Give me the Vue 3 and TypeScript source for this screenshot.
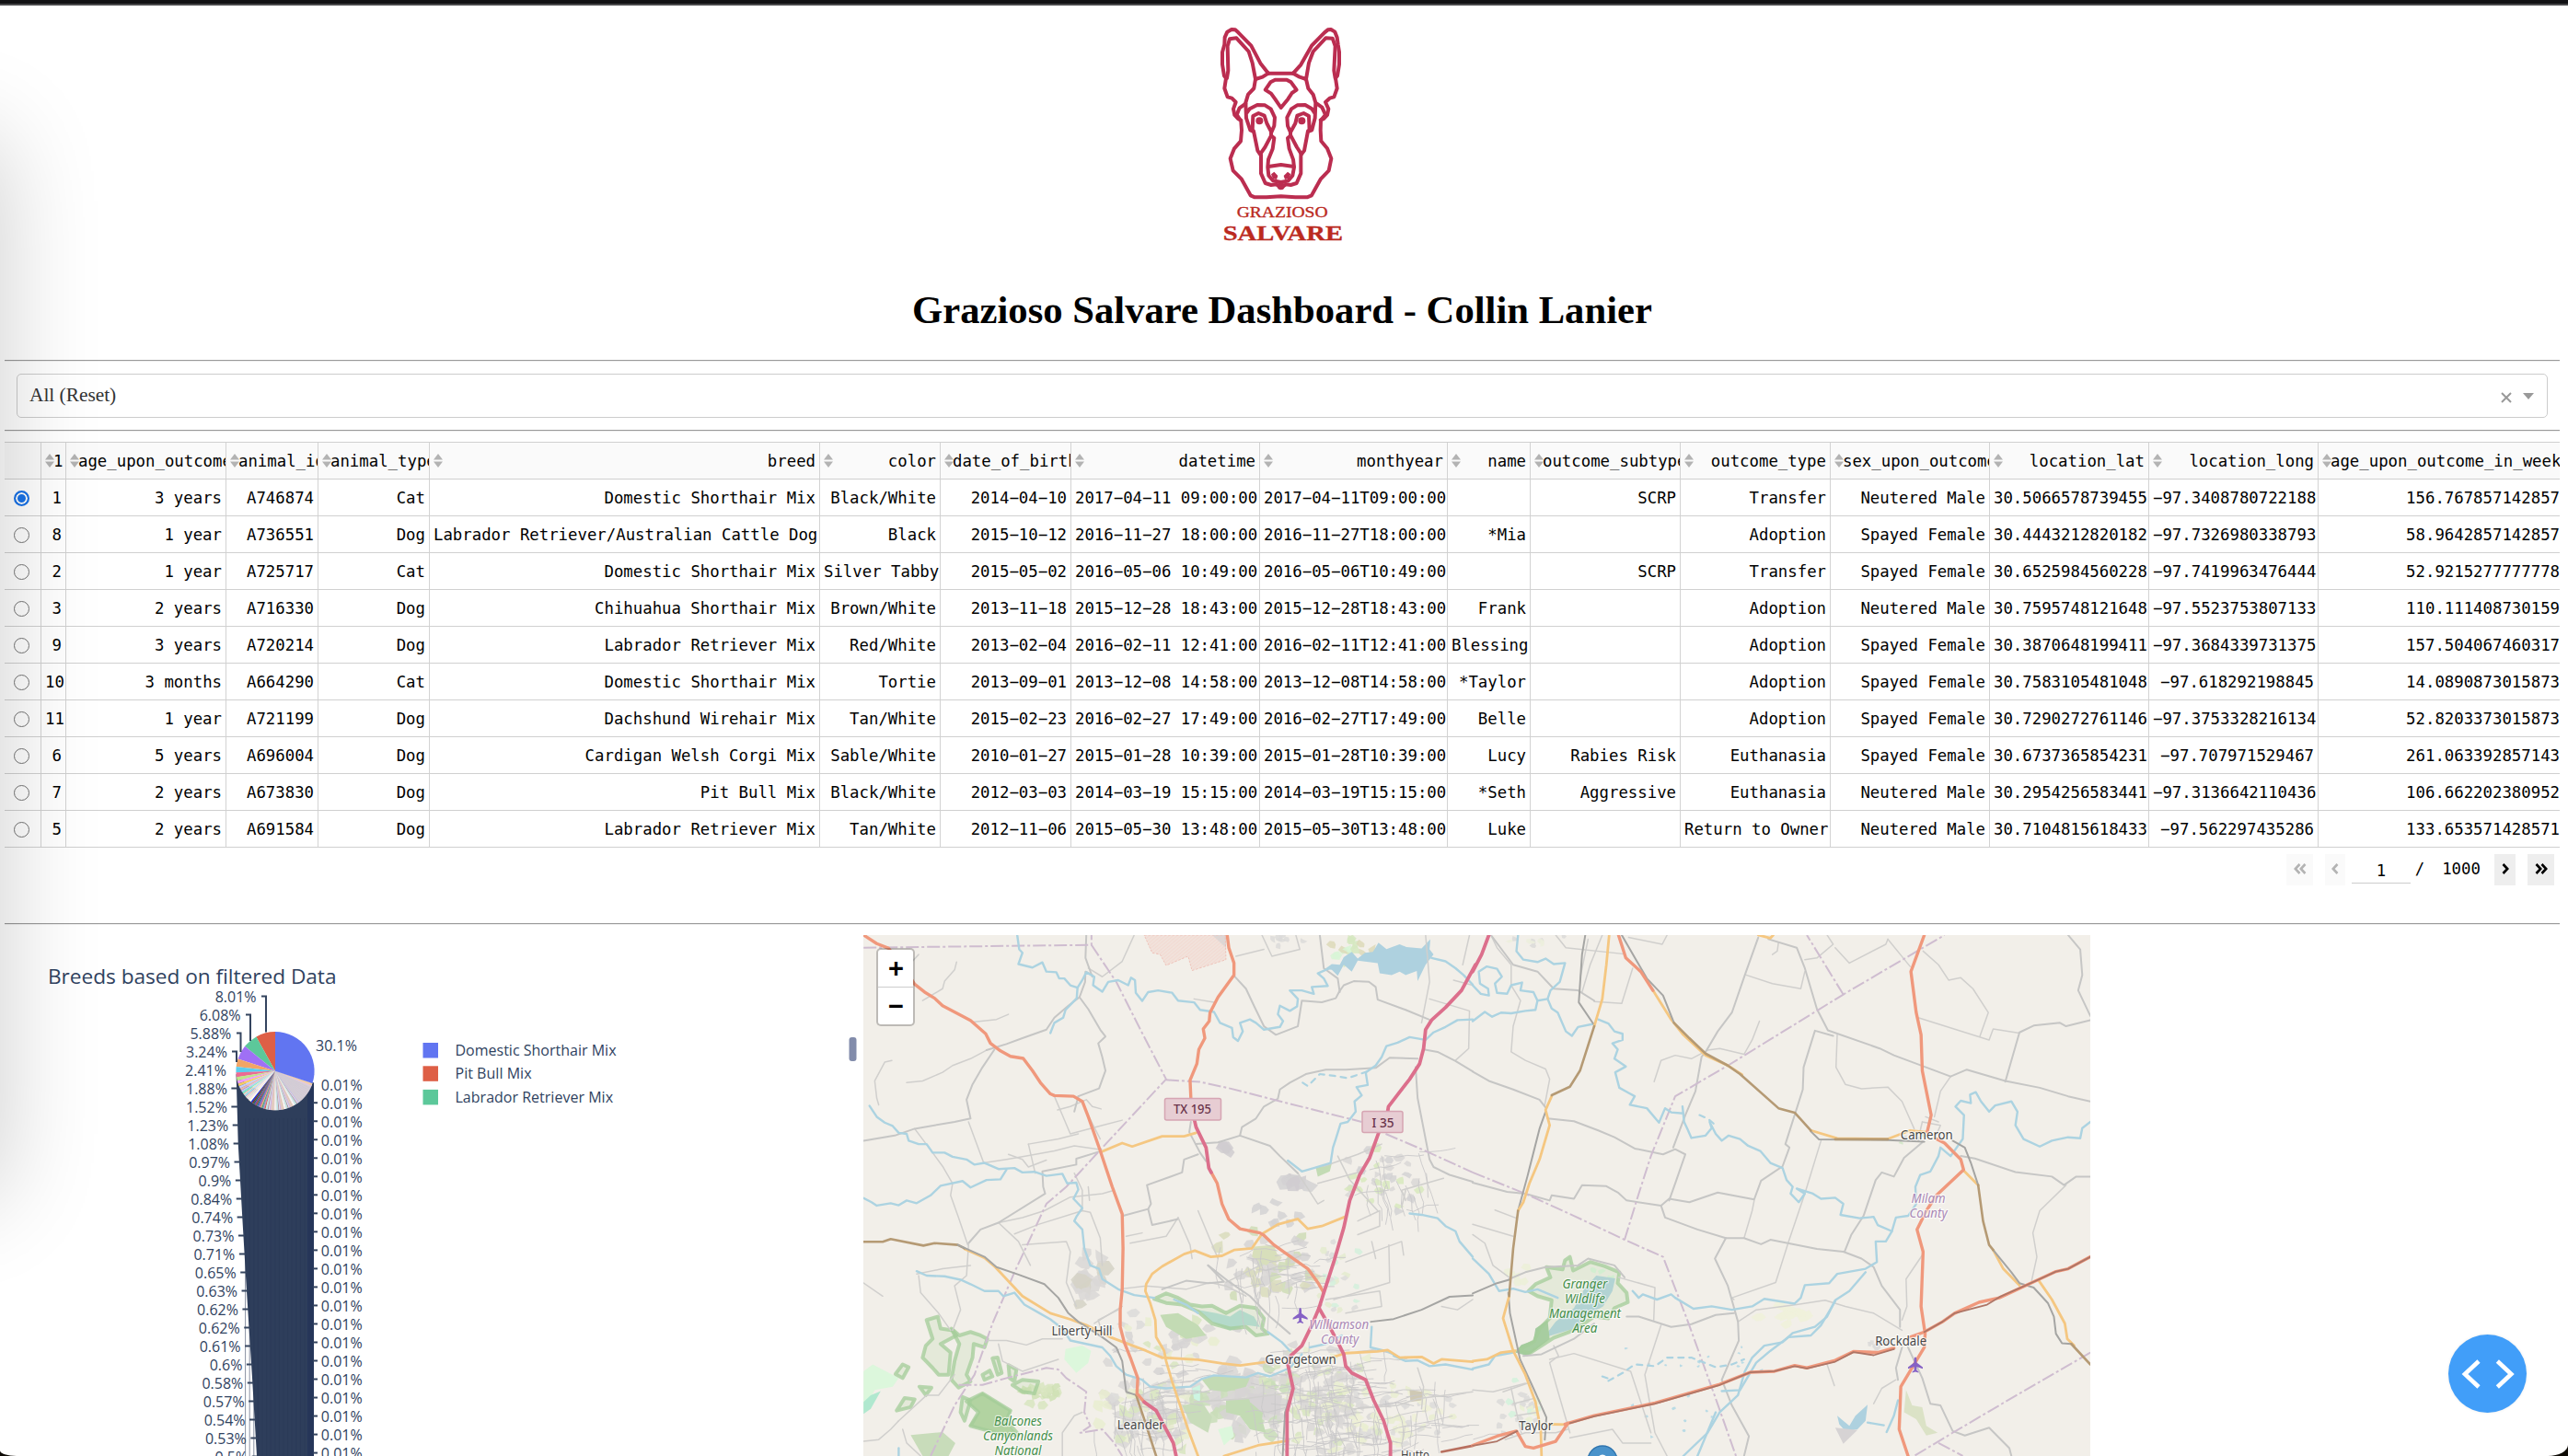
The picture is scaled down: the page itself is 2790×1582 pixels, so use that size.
<script setup lang="ts">
interface Column { name: string; width: number }
interface Stroke { d: string; kind: string }
interface Blob { d: string; fill: string }

const columns: Column[] = [
  { name: '1', width: 27 },
  { name: 'age_upon_outcome', width: 174 },
  { name: 'animal_id', width: 100 },
  { name: 'animal_type', width: 121 },
  { name: 'breed', width: 424 },
  { name: 'color', width: 131 },
  { name: 'date_of_birth', width: 142 },
  { name: 'datetime', width: 205 },
  { name: 'monthyear', width: 204 },
  { name: 'name', width: 90 },
  { name: 'outcome_subtype', width: 163 },
  { name: 'outcome_type', width: 163 },
  { name: 'sex_upon_outcome', width: 173 },
  { name: 'location_lat', width: 173 },
  { name: 'location_long', width: 184 },
  { name: 'age_upon_outcome_in_weeks', width: 262 },
]
const gridTemplate = '40px ' + columns.map((c) => c.width + 'px').join(' ')

const rows: string[][] = [
  ['1', '3 years', 'A746874', 'Cat', 'Domestic Shorthair Mix', 'Black/White', '2014-04-10', '2017-04-11 09:00:00', '2017-04-11T09:00:00', '', 'SCRP', 'Transfer', 'Neutered Male', '30.5066578739455', '-97.3408780722188', '156.767857142857'],
  ['8', '1 year', 'A736551', 'Dog', 'Labrador Retriever/Australian Cattle Dog', 'Black', '2015-10-12', '2016-11-27 18:00:00', '2016-11-27T18:00:00', '*Mia', '', 'Adoption', 'Spayed Female', '30.4443212820182', '-97.7326980338793', '58.9642857142857'],
  ['2', '1 year', 'A725717', 'Cat', 'Domestic Shorthair Mix', 'Silver Tabby', '2015-05-02', '2016-05-06 10:49:00', '2016-05-06T10:49:00', '', 'SCRP', 'Transfer', 'Spayed Female', '30.6525984560228', '-97.7419963476444', '52.9215277777778'],
  ['3', '2 years', 'A716330', 'Dog', 'Chihuahua Shorthair Mix', 'Brown/White', '2013-11-18', '2015-12-28 18:43:00', '2015-12-28T18:43:00', 'Frank', '', 'Adoption', 'Neutered Male', '30.7595748121648', '-97.5523753807133', '110.111408730159'],
  ['9', '3 years', 'A720214', 'Dog', 'Labrador Retriever Mix', 'Red/White', '2013-02-04', '2016-02-11 12:41:00', '2016-02-11T12:41:00', 'Blessing', '', 'Adoption', 'Spayed Female', '30.3870648199411', '-97.3684339731375', '157.504067460317'],
  ['10', '3 months', 'A664290', 'Cat', 'Domestic Shorthair Mix', 'Tortie', '2013-09-01', '2013-12-08 14:58:00', '2013-12-08T14:58:00', '*Taylor', '', 'Adoption', 'Spayed Female', '30.7583105481048', '-97.618292198845', '14.0890873015873'],
  ['11', '1 year', 'A721199', 'Dog', 'Dachshund Wirehair Mix', 'Tan/White', '2015-02-23', '2016-02-27 17:49:00', '2016-02-27T17:49:00', 'Belle', '', 'Adoption', 'Spayed Female', '30.7290272761146', '-97.3753328216134', '52.8203373015873'],
  ['6', '5 years', 'A696004', 'Dog', 'Cardigan Welsh Corgi Mix', 'Sable/White', '2010-01-27', '2015-01-28 10:39:00', '2015-01-28T10:39:00', 'Lucy', 'Rabies Risk', 'Euthanasia', 'Spayed Female', '30.6737365854231', '-97.707971529467', '261.063392857143'],
  ['7', '2 years', 'A673830', 'Dog', 'Pit Bull Mix', 'Black/White', '2012-03-03', '2014-03-19 15:15:00', '2014-03-19T15:15:00', '*Seth', 'Aggressive', 'Euthanasia', 'Neutered Male', '30.2954256583441', '-97.3136642110436', '106.662202380952'],
  ['5', '2 years', 'A691584', 'Dog', 'Labrador Retriever Mix', 'Tan/White', '2012-11-06', '2015-05-30 13:48:00', '2015-05-30T13:48:00', 'Luke', '', 'Return to Owner', 'Neutered Male', '30.7104815618433', '-97.562297435286', '133.653571428571'],
]
const show = (v: string) => v.replace(/-/g, '−')

/* ---------- pie chart ---------- */
const PIE = { x: 299, y: 1163.7, r: 42.6 }
const shares = [8.01, 6.08, 5.88, 3.24, 2.41, 1.88, 1.52, 1.23, 1.08, 0.97, 0.9, 0.84, 0.74, 0.73, 0.71, 0.65, 0.63, 0.62, 0.62, 0.61, 0.6, 0.58, 0.57, 0.54, 0.53, 0.5]
const baseColors = ['#de5f46', '#5cc89a', '#9f70f5', '#f2a566', '#5dcdee', '#ec6a94', '#bfe58c', '#ee9df8', '#f7cc62', '#c5cdfa', '#e8b9b0', '#c9c4f4', '#7df0cf', '#f3d9c8', '#a5e9f5', '#f7cbd9', '#e6f4d8', '#fbe6fb', '#fdf3da', '#ffffff', '#1a35d8', '#7a3328', '#1f6e58', '#6a3fb8', '#a0512f', '#2b6f8c']
const darkTail = ['#5866b8', '#d5604a', '#4a8f7a', '#8d68cf', '#c58a62', '#66a9c0', '#c8607f', '#a9bd8c', '#c78cc7', '#e0c078']
const paleTail = ['#dfe2f4', '#e3b9b2', '#c9ece0', '#c7b9ea', '#f2e0d0', '#b9e2f0', '#eab8c8', '#ffffff', '#b78f96', '#e2dcc0', '#f4f4f4']
const greyTail = ['#d3d3dc', '#d9cdc9', '#c8d4d0', '#cfc8da', '#ddd4c9', '#c6d6da', '#dccbd1', '#e4e4e4', '#b6aeb2']

function wedge(from: number, to: number, color: string): Blob {
  const a = (from / 100) * Math.PI * 2
  const b = (to / 100) * Math.PI * 2
  const p = (t: number) => `${(PIE.x - PIE.r * Math.sin(t)).toFixed(2)},${(PIE.y - PIE.r * Math.cos(t)).toFixed(2)}`
  return { d: `M${PIE.x},${PIE.y}L${p(a)}A${PIE.r},${PIE.r} 0 0 0 ${p(b)}Z`, fill: color }
}
const slices: Blob[] = [wedge(38, 69.9, '#cfcccf')]
let cursor = 0
shares.forEach((v, i) => {
  slices.push(wedge(cursor, cursor + v + 0.03, baseColors[i]))
  cursor += v
})
let n = 0
while (cursor < 69.5) {
  const v = cursor < 50 ? 0.42 : cursor < 60 ? 0.36 : 0.3
  const set = cursor < 46 ? darkTail : cursor < 60 ? paleTail : greyTail
  slices.push(wedge(cursor, Math.min(cursor + v + 0.03, 69.9), set[(n * 3) % set.length]))
  cursor += v
  n++
}
slices.push(wedge(69.0, 69.9, '#f3cfa8'))
slices.push(wedge(68.3, 69.0, '#e3cbe0'))
slices.push(wedge(69.9, 100, '#6175f1'))

const leftX = [624, 586, 563, 553, 551, 553, 553, 556, 558, 560, 563, 565, 567, 570, 572, 575, 578, 580, 584, 586, 590, 592, 595, 597, 600, 603]
const leftNames = ['8.01', '6.08', '5.88', '3.24', '2.41', '1.88', '1.52', '1.23', '1.08', '0.97', '0.9', '0.84', '0.74', '0.73', '0.71', '0.65', '0.63', '0.62', '0.62', '0.61', '0.6', '0.58', '0.57', '0.54', '0.53', '0.5']
const leftLabels = leftNames.map((t, i) => ({
  text: t + '%',
  x: leftX[i] * 0.44643,
  y: 1083.4 + i * 20.0,
  tick: i > 4,
}))
const rightLabels = Array.from({ length: 21 }, (_, k) => ({ x: 348.8, y: 1179.2 + k * 20.02, tick: k > 0 }))
const legend = [
  { name: 'Domestic Shorthair Mix', color: '#6175f1', y: 1141, w: 175 },
  { name: 'Pit Bull Mix', color: '#de5f46', y: 1166.3, w: 83 },
  { name: 'Labrador Retriever Mix', color: '#5cc89a', y: 1191.9, w: 171.5 },
]

/* ---------- map: two adjoining sheets, each with its own survey units ---------- */
let seed = 7
const rnd = () => {
  seed = (seed * 16807) % 2147483647
  return seed / 2147483647
}
function patches(cx: number, cy: number, rx: number, ry: number, count: number, size: number, fills: string[]): Blob[] {
  const out: Blob[] = []
  for (let i = 0; i < count; i++) {
    const x = cx + (rnd() + rnd() - 1) * rx
    const y = cy + (rnd() + rnd() - 1) * ry
    const pts: string[] = []
    for (let k = 0; k < 6; k++) {
      const t = (k / 6) * Math.PI * 2
      const s = size * (0.35 + rnd() * 0.75)
      pts.push(`${(x + Math.cos(t) * s).toFixed(0)},${(y + Math.sin(t) * s).toFixed(0)}`)
    }
    out.push({ d: 'M' + pts.join(' ') + 'Z', fill: fills[i % fills.length] })
  }
  return out
}
function streets(cx: number, cy: number, rx: number, ry: number, count: number): Stroke[] {
  const out: Stroke[] = []
  for (let i = 0; i < count; i++) {
    let x = cx + (rnd() + rnd() - 1) * rx
    let y = cy + (rnd() + rnd() - 1) * ry
    let d = `M${x.toFixed(0)},${y.toFixed(0)}`
    const flat = rnd() > 0.5
    for (let k = 0; k < 4; k++) {
      x += flat ? 12 + rnd() * 22 : (rnd() - 0.35) * 16
      y += flat ? (rnd() - 0.6) * 18 : 14 + rnd() * 24
      d += ` ${x.toFixed(0)},${y.toFixed(0)}`
    }
    out.push({ d, kind: 'street' })
  }
  return out
}
const urban = ['#d9d7d6', '#d6d3d4', '#dcdad9', '#d8e5bf', '#d9d7d6', '#e9edd0']
const westPatches: Blob[] = [
  ...patches(600, 1060, 60, 110, 16, 26, ['#d9d7d6', '#d9d7d6', '#d5d2c6']),
  ...patches(1060, 1010, 130, 110, 50, 20, ['#d6d3d4', '#d9dcbc', '#d9d7d6', '#cfdcb6']),
  ...patches(1120, 770, 50, 24, 8, 26, ['#d0cdd0', '#d4d2d3']),
  ...patches(955, 668, 22, 22, 4, 22, ['#d0cdd0']),
  ...patches(1340, 760, 110, 100, 38, 15, ['#d9d7d6', '#d8e9bd', '#d4d2d3']),
  ...patches(1060, 860, 90, 40, 8, 18, ['#d4d2d3']),
  ...patches(800, 1230, 180, 90, 44, 16, urban),
  ...patches(760, 1440, 160, 130, 90, 20, urban),
  ...patches(1000, 1400, 150, 120, 70, 26, ['#d9d7d6', '#d6d3d4', '#d9d7d6', '#c9ddb9']),
  ...patches(1180, 1400, 180, 170, 170, 16, ['#d9d7d6', '#e9edd0', '#d8e5bf', '#dad8d7', '#d9d7d6']),
  ...patches(1380, 1450, 170, 110, 60, 14, ['#e9edd0', '#dcdad9', '#eef0d6']),
  ...patches(1230, 1060, 70, 140, 24, 12, ['#e4ebcf', '#dcdad9', '#d3f0dc']),
  ...patches(480, 1390, 60, 50, 20, 16, ['#d8e5bf', '#cfe0b4']),
  ...patches(1260, 90, 70, 50, 16, 16, ['#d5e8bf', '#d8f5d6', '#ddd9b8']),
  ...patches(1100, 60, 90, 20, 8, 12, ['#dcdad9']),
]
const westStreets: Stroke[] = [
  ...streets(1190, 1420, 220, 220, 130),
  ...streets(1060, 1040, 130, 120, 34),
  ...streets(740, 1400, 150, 190, 44),
  ...streets(1340, 770, 130, 120, 18),
  ...streets(1440, 1440, 150, 150, 24),
]
const westNature: Blob[] = [
  { d: 'M745,43 L948,43 950,115 865,147 855,105 800,132 785,100 765,95Z', fill: '#f1e2db' },
  { d: 'M915,43 L950,43 950,80Z', fill: '#dbd8d7' },
  { d: 'M65,1300 L130,1340 115,1365 70,1375 42,1440 42,1320Z', fill: '#dcf7dc' },
  { d: 'M60,1390 L85,1378 60,1430 42,1445 42,1410Z', fill: '#b0e8cf' },
  { d: 'M548,1255 L590,1245 612,1260 605,1295 575,1325 545,1285Z', fill: '#dcf7dc' },
  { d: 'M930,1490 L965,1480 970,1510 945,1537Z', fill: '#dcf7dc' },
  { d: 'M865,1370 L885,1360 885,1410 870,1400Z', fill: '#cdf5e2' },
  { d: 'M160,1507 L240,1498 272,1530 255,1568 190,1568Z', fill: '#c8dcba' },
  { d: 'M340,1382 L412,1435 400,1470 430,1510 400,1510 305,1480 330,1440 300,1410Z', fill: '#b2d3a2' },
  { d: 'M890,1345 L920,1332 1010,1340 1000,1365 950,1380 910,1375Z', fill: '#c3dbb4' },
  { d: 'M950,1405 L1000,1398 1045,1420 1040,1460 1050,1500 1010,1490 985,1450 950,1440Z', fill: '#c3dbb4' },
  { d: 'M840,1420 L890,1410 915,1455 905,1500 860,1470Z', fill: '#c8dcba' },
  { d: 'M785,1155 L830,1150 880,1185 900,1215 850,1225 800,1190Z', fill: '#c3dbb4' },
  { d: 'M1020,955 L1070,950 1080,985 1050,1010 1015,985Z', fill: '#d8dfbb' },
  { d: 'M1410,1375 L1445,1380 1440,1405 1412,1410Z', fill: '#cfc9b4' },
  { d: 'M1175,725 L1215,712 1210,735 1180,750Z', fill: '#c3dbb4' },
  { d: 'M1005,1385 L1090,1390 1085,1450 1040,1440 1010,1410Z', fill: '#d6d3d4' },
  { d: 'M880,1140 L925,1150 960,1160 985,1140 1020,1160 1035,1190 1000,1185 960,1200 920,1180Z', fill: '#b5dbd6' },
  { d: 'M1198,142 L1215,128 1235,130 1245,108 1265,92 1280,112 1298,95 1318,92 1332,65 1352,84 1385,70 1402,78 1440,82 1462,55 1460,85 1470,100 1450,130 1430,178 1428,148 1400,160 1385,150 1365,160 1335,155 1330,125 1280,118 1265,150 1245,130 1230,162 1215,145Z', fill: '#aed1df' },
]
const parks: string[] = [
  'M200,1170 L228,1160 235,1195 265,1200 275,1215 235,1240 260,1265 255,1330 230,1330 215,1310 190,1280 198,1245 215,1225Z',
  'M262,1195 L282,1215 310,1205 335,1215 352,1225 345,1250 318,1240 315,1280 300,1330 310,1350 280,1368 262,1345 270,1290 282,1240Z',
  'M122,1328 L140,1300 155,1308 140,1340Z',
  'M125,1435 L145,1398 170,1402 160,1425Z M182,1365 L212,1368 198,1390Z',
  'M365,1282 L378,1280 388,1325 378,1330Z M405,1302 L425,1315 420,1350 408,1340Z M340,1330 L358,1318 365,1335 345,1345Z M415,1360 L440,1345 480,1350 470,1385 440,1380Z M290,1395 L310,1405 295,1465 285,1440Z',
  'M340,1385 L410,1435 400,1465 430,1505 400,1508 310,1480 330,1440 300,1408Z',
]
const lakePark = 'M770,1108 L800,1092 830,1105 860,1125 890,1130 915,1128 950,1150 985,1128 1025,1135 1045,1165 1040,1195 1055,1210 1025,1215 1000,1190 960,1195 915,1180 880,1145 840,1125 800,1120Z'

const west: Stroke[] = [
  ...[
    'M275,122 270,145 245,178 240,200 190,235', 'M405,275 375,290 315,298',
    'M113,410 95,415 70,470 75,520 80,540', 'M180,100 160,125 105,140',
    'M150,475 190,470 240,445 265,425 310,405 350,380',
    'M170,610 215,680 240,720 265,770 260,805 280,870 303,950', 'M305,590 343,710 400,700 450,690 520,675 570,660 630,670',
    'M520,515 540,570 560,625 640,600 690,585', 'M528,555 560,545 600,525 615,545 637,552', 'M455,655 530,640 580,625', 'M455,655 462,690 472,740', 'M405,685 440,700 455,722 500,702',
    'M380,885 440,870 495,850 560,810 640,800 670,790', 'M420,918 480,890 590,850 610,855 635,930 640,1010', 'M380,885 430,940 460,1010', 'M440,950 550,940 560,970 550,1060 575,1130',
    'M830,870 860,950 865,990', 'M880,850 905,920 930,990', 'M740,915 700,925', 'M710,945 800,925 830,870',
    'M570,740 590,790 590,850', 'M605,780 608,820', 'M635,640 600,560',
    'M1130,740 1180,830 1195,820', 'M1180,770 1290,735 1325,650', 'M1230,690 1260,760 1330,850', 'M1195,720 1280,685 1340,655',
    'M1400,820 1390,790 1495,755', 'M1280,880 1335,850 1335,895 1280,920', 'M1250,1000 1390,940 1395,980',
    'M1200,1110 1335,1085 1340,1130 1250,1150', 'M1325,990 1315,940', 'M1358,950 1360,1060 1220,1110', 'M1390,840 1400,790',
    'M1450,43 1460,180 1440,300', 'M1460,230 1560,265 1558,375 1525,410', 'M1040,43 1065,105 1135,85 1125,43', 'M975,105 1045,85', 'M1560,43 1543,130', 'M1520,175 1568,190',
    'M605,140 640,165 690,120 720,43', 'M40,1060 90,1100', 'M180,1040 185,1090 230,1150 260,1200', 'M305,950 300,1040 270,1070 285,1140 265,1200',
    'M310,1010 240,1020 175,1035', 'M130,1465 110,1490 80,1520 42,1525', 'M130,1465 200,1390 230,1390 270,1330', 'M350,1230 400,1230 450,1243 490,1225 540,1225', 'M380,1240 390,1290 440,1320 530,1285',
    'M540,1568 540,1500 570,1450 590,1440', 'M140,1490 150,1530 185,1568', 'M1430,1310 1445,1365 1440,1430', 'M1270,1430 1380,1420 1430,1400 1568,1380',
    'M870,1410 1000,1400 1120,1380 1270,1430', 'M870,230 920,240', 'M1490,1130 1530,1140 1568,1110', 'M1035,1010 950,1060',
    'M693,1078 750,1070 850,1080 910,1060 950,1070 1000,1100', 'M620,1180 690,1130', 'M640,1210 630,1170 680,1140',
  ].map((d) => ({ d, kind: 'minor' })),
  ...[
    'M350,380 400,362 440,345 500,320 520,285 555,250 583,225 597,180 598,150 615,160',
    'M600,43 598,110 615,165', 'M370,378 340,430 315,480 300,525 310,580 270,590 170,610 120,630 42,645',
    'M583,225 605,260 635,320 648,340 630,360 640,400 648,440 632,492 580,515',
    'M630,678 575,698 575,715 490,735 492,780 497,800 380,885 335,905 305,945', 'M580,515 570,560',
    'M692,865 755,845 762,830 752,775 840,738 845,700 880,685', 'M755,845 765,892 828,875', 'M875,655 905,652 930,650 985,630 1060,660 1085,690 1130,740',
    'M862,590 858,620 885,680 900,705', 'M985,630 990,605 1025,580 1045,545 1080,522 1085,495 1110,475 1150,450 1200,437 1250,437 1325,432 1360,402 1430,405',
    'M970,162 1000,200 1020,250 1045,310 1075,335 1130,310 1140,235 1190,240 1225,228 1233,210 1245,190 1270,178 1308,180 1325,195 1330,232 1400,262 1458,290',
    'M1185,43 1195,140 1230,170 1235,210', 'M1445,378 1480,385 1525,412 1568,442', 'M1425,430 1430,520 1450,640 1460,700 1470,722 1510,745 1568,765',
    'M790,1080 850,1055 905,1062 945,1058 905,1010', 'M905,1010 960,1060 1010,1100 1060,1160 1110,1210',
  ].map((d) => ({ d, kind: 'local' })),
  ...[
    'M42,80 L613,72 613,43', 'M613,72 L675,180 740,330 800,465 635,672 550,780 500,830 420,1030 365,1180 320,1330 270,1420 210,1568',
    'M800,467 L885,473 960,492 1080,528 1290,590', 'M1350,625 1450,675 1568,738', 'M280,1360 L340,1360 400,1340 500,1310 530,1315 550,1340 600,1380 595,1440 610,1480 585,1500 640,1490 670,1530 690,1568',
  ].map((d) => ({ d, kind: 'county' })),
  ...[
    'M427,43 432,85 440,95 430,128 465,138 490,123 500,150 525,152 532,170 545,170 560,190 578,197 590,175 600,152 620,165 617,190 640,209 655,180 680,175 705,190 712,168 722,175 724,212 740,236 755,210 780,205 815,212 830,235 870,240 885,262 920,268 935,300 965,315 968,342 980,353 992,325 985,300 1010,290 1025,300 1045,320 1085,312 1093,295 1080,275 1085,250 1110,265 1128,252 1130,230 1110,205 1140,205 1170,215 1165,195 1205,192 1195,170 1180,155 1210,140',
    'M578,197 576,228 548,262 542,285 520,300 510,330',
    'M1465,110 1500,120 1525,140 1545,160 1568,188',
    'M57,543 75,575 95,592 115,602 130,622 150,625 155,645 180,655 200,655 215,680 245,680 265,692 300,700 320,715 345,710 380,728 420,725 440,738 470,736 500,748 540,742 552,770 575,768 580,788 568,815 590,842 575,868 570,880 590,905 595,960 610,1010 632,1020 640,1050 680,1080 720,1097 770,1105',
    'M42,813 62,825 75,835 110,828 130,834 150,820 175,828 210,805 235,777 290,763 310,782 350,760 385,758 400,730',
    'M175,1027 200,1040 245,1042 285,1052 310,1065 345,1085 380,1085 392,1100 420,1090 445,1125 480,1148 510,1168 540,1195 560,1230 600,1240 640,1250 660,1275 675,1305 700,1330 740,1345 760,1365 800,1370 860,1365 890,1342 920,1332 1000,1338 1030,1325 1060,1335 1110,1310 1140,1270',
    'M1568,290 1530,292 1500,312 1470,328 1450,350 1410,342 1380,358 1352,368 1340,400 1325,425 1300,445 1305,482 1277,488 1290,512 1272,530 1275,560 1255,590 1237,595 1225,640 1218,665 1212,710 1170,725 1140,735 1105,703',
    'M1410,858 1440,862 1480,872 1500,895 1525,910 1535,940 1568,985', 'M1385,1280 1355,1262 1312,1250 1315,1190',
    'M1370,1275 1400,1290 1430,1288 1460,1305 1500,1300 1568,1315', 'M1055,1205 1090,1235 1110,1260', 'M1160,1250 1200,1240 1240,1215',
    'M820,1110 850,1125 880,1150', 'M130,1568 130,1545',
  ].map((d) => ({ d, kind: 'river' })),
  { d: 'M1142,475 1155,485 1185,450 1220,455 1255,462 1310,440', kind: 'creek' },
  ...[
    'M637,678 690,652 715,662 790,632 845,632 875,622', 'M1040,918 1080,890 1130,874 1155,903 1190,895 1248,868',
    'M1040,918 1015,960 970,965 940,982 912,985 872,967 845,977 790,1013 765,1035 750,1065 748,1085 760,1120 773,1170 775,1220 795,1260 800,1290 815,1350 835,1420 855,1490 880,1568',
    'M790,1280 750,1260 660,1220 600,1185 560,1168 510,1150 440,1100 400,1050 372,1015 345,988 295,962',
    'M790,1280 880,1286 940,1297 985,1303 1050,1293', 'M1200,1285 1250,1267 1330,1262 1355,1258 1385,1280 1440,1278 1470,1297 1490,1285 1568,1292', 'M945,1568 1030,1537 1105,1523',
  ].map((d) => ({ d, kind: 'primary' })),
  { d: 'M42,941 90,941 110,933 192,952 220,945 278,950 295,960', kind: 'brown' },
  { d: 'M278,950 345,985 375,1015 430,1037 495,1065 530,1105 555,1150 580,1175 640,1220 675,1250 690,1290 700,1380 725,1390', kind: 'rail' },
  { d: 'M725,1390 745,1460 775,1568', kind: 'brown' },
  { d: 'M1313,1175 1370,1167 1440,1140 1510,1102 1568,1098', kind: 'rail' },
  { d: 'M1118,1370 1098,1440 1092,1568', kind: 'rail' },
  { d: 'M1490,1556 1568,1538', kind: 'rust' },
  ...[
    'M42,43 75,68 105,82 150,150 170,187 195,210 220,228 240,250 310,293 348,332 360,360 385,382 410,398 442,404 465,440 485,475 510,508 520,513 568,515 590,530 605,575 635,675 665,780 690,860 692,960 690,1080 685,1140 685,1190 695,1235 712,1285 729,1340 727,1385 745,1410',
    'M953,43 957,80 970,125 970,160 930,225 910,270 908,295 893,318 897,345 882,378 877,420 860,468 862,520',
    'M913,738 928,770 940,830 957,875 985,903 1035,915 1045,922 1070,950 1100,975 1155,1020 1180,1060 1195,1090',
  ].map((d) => ({ d, kind: 'trunk' })),
  ...[
    'M745,1410 775,1435 800,1490 818,1530 825,1568', 'M871,585 875,605 900,665 907,725 913,738',
    'M1575,130 1540,205 1500,255 1465,292 1450,320 1445,375 1435,420 1410,465 1380,510 1357,545 1355,560',
    'M1333,620 1310,695 1285,745 1260,820 1245,900 1220,1000 1195,1090 1183,1135 1165,1185 1140,1245 1112,1275 1105,1300 1118,1370 1103,1440 1103,1568',
    'M1183,1135 1205,1180 1230,1235 1245,1270 1250,1305 1265,1325 1300,1345 1320,1405 1345,1465 1362,1530 1362,1568',
  ].map((d) => ({ d, kind: 'motorway' })),
]

const eastPatches: Blob[] = [
  ...patches(115, 1430, 60, 90, 26, 13, ['#dcdad9', '#eaf0d4', '#d5f2dd', '#dcdad9']),
  ...patches(770, 1150, 80, 35, 10, 20, ['#eff1da']),
  ...patches(1000, 1245, 40, 18, 8, 9, ['#dcdad9']),
  ...patches(170, 60, 90, 30, 10, 10, ['#dcdad9', '#eceedd']),
  ...patches(330, 1030, 40, 20, 4, 12, ['#d9f5dd']),
  ...patches(110, 1050, 40, 40, 6, 16, ['#ecefd8']),
  ...patches(560, 1290, 190, 60, 12, 5, ['#b2d8e4']),
  ...patches(520, 1450, 160, 90, 10, 6, ['#b2d8e4']),
  ...patches(1090, 640, 40, 20, 6, 8, ['#dcdad9', '#d2e7c8']),
]
const eastNature: Blob[] = [
  { d: 'M305,1040 L352,1048 345,1085 322,1130 292,1150 250,1195 175,1222 205,1175 250,1135 275,1080Z', fill: '#b2d2e2' },
  { d: 'M155,1195 L185,1170 190,1225 150,1262 135,1275 105,1265 120,1243 150,1230Z', fill: '#a5cba0' },
  { d: 'M900,1450 L930,1480 945,1450 975,1418 970,1465 950,1490 920,1495 905,1475Z', fill: '#aed1df' },
  { d: 'M895,1485 L950,1492 915,1532Z', fill: '#d6d3d4' },
  { d: 'M1070,1375 L1085,1420 1110,1425 1120,1480 1148,1500 1120,1508 1095,1460 1065,1440Z', fill: '#dbe2c6' },
]
const granger = 'M240,985 L228,995 222,1022 182,1015 192,1045 155,1065 138,1085 160,1100 195,1112 190,1165 165,1195 152,1232 112,1258 140,1268 200,1222 250,1200 300,1160 335,1165 350,1135 383,1118 380,1090 358,1062 362,1030 325,1012 290,1000 248,1025Z'
const east: Stroke[] = [
  ...[
    'M45,43 60,80 95,130 95,190 118,235 100,310 95,385 130,410 180,435 190,465 178,540', 'M320,43 290,130 270,210', 'M285,55 265,170', 'M205,43 230,80 370,98',
    'M395,140 368,243 300,238', 'M480,43 468,70 385,50', 'M675,160 740,185 810,200 820,150', 'M755,65 752,90 740,100', 'M820,115 850,110 890,70 875,43', 'M895,80 930,125 1020,70 1025,55',
    'M1025,55 1080,135', 'M1112,90 1150,130 1175,175 1205,168 1235,200 1273,270 1252,340', 'M1100,285 1275,350 1285,318 1350,330', 'M900,335 897,430 920,480 960,493 1025,488 1060,530 1090,610',
    'M1180,457 1155,500 1140,575', 'M448,472 465,410 500,395 540,405 580,380 610,375 670,392 690,350 708,295', 'M860,645 820,800 780,940 748,1060 640,1105 645,1110',
    'M670,930 690,850 695,820', 'M1465,775 1400,850 1383,915 1393,985 1380,1055', 'M1110,980 1070,1050 1072,1130 1060,1170', 'M360,1045 450,1075 447,1170', 'M465,1185 425,1330 450,1500 480,1568',
    'M200,1245 212,1275 190,1295 240,1500', 'M190,1285 250,1268 390,1320 440,1500', 'M240,1515 345,1490 370,1530 440,1530', 'M0,890 100,925', 'M55,848 108,872', 'M0,920 30,945 50,1010 90,1045',
    'M655,1175 700,1140 800,1125 870,1112 920,1130 990,1150 1060,1200', 'M875,1300 893,1362', 'M1045,1345 1010,1370 990,1415', 'M235,1490 205,1500 130,1500 80,1520', 'M95,1370 110,1450 120,1500', 'M75,1380 135,1355', 'M100,1415 150,1400', 'M105,1450 160,1440',
    'M0,1375 50,1380 130,1355', 'M1110,590 1155,600 1140,640', 'M1105,615 1110,590', 'M1118,575 1150,590',
  ].map((d) => ({ d, kind: 'minor' })),
  ...[
    'M45,43 100,130 160,150 200,200 260,205 300,235', 'M0,443 40,470 100,495 165,525 180,548', 'M185,580 250,588 310,615 350,635 400,668 470,685 500,670 525,685 500,770 485,820',
    'M0,768 85,795 130,800 190,820 195,805 250,815 270,775 330,778 360,798 380,820 465,835 485,815 535,825 605,797 695,817 712,762 765,720 782,665 772,655 815,495 817,430 845,323 890,338',
    'M465,835 475,870 555,905 625,930 670,930 712,948 735,935 850,962 915,970 960,990 990,1015 1010,1070 1055,1140 1055,1190', 'M625,930 598,990 630,1070 655,1175 657,1230 615,1345 640,1420 682,1510 670,1568',
    'M705,50 672,160 640,270 605,325 575,385 565,400 550,500 525,570 495,665', 'M730,55 800,80 820,140 850,260 877,322 1005,375 1040,395 1180,457 1220,437 1315,470 1400,490 1470,515 1525,530',
    'M1315,472 1350,328 1385,308 1450,300 1465,310 1525,292', 'M1470,43 1500,85 1505,160 1495,205 1525,280', 'M1205,690 1240,697 1340,737 1430,750 1460,775 1490,750 1525,750',
    'M1110,650 1065,695 1040,750 1010,738 995,760 965,865 935,920 918,970', 'M380,1160 410,1160 490,1190 540,1182 600,1155 645,1150', 'M90,1050 130,1030 180,1015 260,1010 285,990 350,1010 375,1045',
    'M1060,1250 1045,1310 1050,1345', 'M1075,1250 1110,1340 1130,1415 1155,1420 1185,1495 1215,1508 1275,1485 1325,1545 1330,1568', 'M125,1275 170,1270 250,1225 300,1180',
  ].map((d) => ({ d, kind: 'local' })),
  ...[
    'M0,738 130,800 250,865 375,935 470,985 530,1170 600,1400 650,1568', 'M375,935 410,800 440,690 500,515 630,425 915,217 1165,43', 'M915,217 825,43', 'M1525,1265 1350,1385 1185,1500 1090,1568', 'M1150,1530 1190,1555 1210,1568',
  ].map((d) => ({ d, kind: 'county' })),
  ...[
    'M0,295 30,268 48,282 70,270 95,272 130,265 155,262 160,235 185,230 192,205 215,180 228,125 200,128 180,112 160,122 125,115 108,90 112,43',
    'M0,190 20,215 40,220 38,200 18,185 15,150 35,135 60,142 72,165 55,185 60,212 85,215 95,190 122,182 118,205 150,210 160,235',
    'M185,230 195,258 210,270 230,325 245,338 260,312 298,303',
    'M310,290 335,302 350,325 370,332 370,350 345,360 358,378 350,405 378,428 352,445 362,490 385,505 400,515 388,540 430,550 460,592 475,550 490,562 520,565 518,545 522,590 530,610 540,637 575,630 590,608 585,590 600,625 615,645 632,630 660,640 680,660 710,675 735,710 765,725 775,760 790,780 785,800 805,825 820,800 800,785 840,800 860,815 895,812 915,830 908,862 955,872 990,868 1000,892 1035,910 1045,870 1075,865 1095,830 1093,780 1105,745 1130,735 1150,690 1155,665 1180,690 1210,640 1213,570 1192,545 1205,528 1230,535 1228,510 1242,503 1255,530 1275,560 1290,542 1330,530 1345,560 1340,600 1360,640 1400,662 1430,645 1470,635 1500,638 1505,608 1525,590',
    'M1035,910 1020,940 995,940 998,1000 970,1020 900,1035 880,1062 820,1068 810,1105 795,1122 720,1108 690,1130 640,1140 590,1130 545,1137 500,1105 490,1095 455,1110 420,1095 410,1105 395,1085',
    'M0,990 40,1035 65,1085 100,1078 130,1088 160,1080 210,1105', 'M970,1030 930,1085 895,1112 875,1160 845,1190 790,1208 765,1235 720,1245 690,1280 672,1320 655,1390 610,1440 580,1500 520,1568',
    'M895,1115 860,1185 835,1215 780,1220 735,1260 700,1295 660,1375 615,1378', 'M0,1312 40,1300 55,1275 100,1265', 'M1050,1405 1040,1450 1022,1498', 'M975,1470 1015,1478', 'M555,1568 600,1440',
  ].map((d) => ({ d, kind: 'river' })),
  ...['M335,1348 370,1325 400,1300 450,1305 480,1280 540,1280 600,1308 640,1300 670,1285', 'M560,570 580,580 600,600', 'M320,1335 345,1345'].map((d) => ({ d, kind: 'creek' })),
  { d: 'M278,43 270,100 262,240 298,303', kind: 'rail' },
  { d: 'M180,560 165,610 135,750 112,850', kind: 'rail' },
  { d: 'M88,1090 92,1150 117,1285 150,1370 182,1455 178,1520', kind: 'rail' },
  { d: 'M0,1092 60,1062 90,1052', kind: 'rail' },
  ...[
    'M337,43 330,130 320,230 300,310', 'M195,515 180,555 190,600 165,700 140,770 125,825 112,850', 'M90,1100 75,1165 100,1260 130,1330 155,1410 168,1490 170,1568', 'M0,1290 35,1285 70,1265 105,1260',
    'M445,205 490,290 520,335 575,395 630,425 665,452', 'M835,615 900,638 1025,640 1080,615 1120,620', 'M705,43 735,52 742,43', 'M1212,732 1248,775', 'M1285,965 1310,1020 1350,1068', 'M1398,1055 1430,1110 1462,1180 1468,1225 1485,1245', 'M190,1475 235,1476',
  ].map((d) => ({ d, kind: 'primary' })),
  { d: 'M368,43 430,170 470,220 497,300', kind: 'rail' },
  { d: 'M835,618 855,641 1025,643 1115,648', kind: 'rail' },
  { d: 'M1185,645 1215,665 1230,710 1248,775', kind: 'rail' },
  { d: 'M1285,965 1330,1030 1350,1062 1385,1075 1420,1120 1435,1160 1440,1210 1455,1238 1478,1240', kind: 'rail' },
  ...['M300,310 265,440 240,487 195,512', 'M112,850 100,960 90,1100', 'M497,300 535,345 575,390 630,425 660,450 755,550 795,563 835,615', 'M895,641 1025,641', 'M1248,775 1260,880 1275,950 1285,965', 'M1478,1240 1525,1300'].map((d) => ({ d, kind: 'brown' })),
  ...[
    'M360,43 378,110 415,150 445,205', 'M1115,43 1082,150 1095,270 1107,335 1110,440 1132,570 1122,620',
    'M1145,640 1165,652 1205,700 1212,730 1145,805 1120,850 1097,905 1112,970 1107,1130 1117,1210 1115,1250 1057,1365 1053,1490 1075,1568', 'M235,1472 205,1525 150,1545 130,1540 108,1495 60,1510 0,1537',
    'M1525,985 1470,1020 1440,1028 1385,1058 1300,1105 1250,1118 1190,1150 1160,1175 1115,1205 1080,1220', 'M1040,1252 1000,1265 940,1262 895,1288 825,1310 795,1303 745,1320 685,1323 610,1358 450,1413 300,1450 228,1475',
  ].map((d) => ({ d, kind: 'trunk' })),
  ...['M1525,985 1470,1020 1440,1028 1385,1058 1300,1103 1270,1125 1190,1150 1160,1175 1115,1205', 'M1040,1255 990,1273 940,1264 895,1292 825,1312 795,1305 745,1320 685,1323 610,1360 450,1415 300,1452 240,1472', 'M0,1538 60,1525 110,1495'].map((d) => ({ d, kind: 'track' })),
  { d: 'M40,43 22,100 0,150', kind: 'motorway' },
]

const wx = (x: number) => x * 0.43367 - 18
const ex = (x: number) => x * 0.44005 + 662
const my = (y: number) => y * 0.37117 - 16
const places = [
  { t: 'Liberty Hill', x: wx(589), y: my(1214), w: 66, c: 'town' },
  { t: 'Georgetown', x: wx(1137), y: my(1299), w: 77, c: 'town' },
  { t: 'Leander', x: wx(736), y: my(1491), w: 51, c: 'town' },
  { t: 'Hutto', x: wx(1424), y: my(1578), w: 31, c: 'town' },
  { t: 'Cameron', x: ex(1121), y: my(640), w: 57, c: 'town' },
  { t: 'Rockdale', x: ex(1057), y: my(1244), w: 56, c: 'town' },
  { t: 'Taylor', x: ex(156), y: my(1493), w: 37, c: 'town' },
  { t: 'Williamson', x: wx(1233), y: my(1195), w: 65, c: 'area' },
  { t: 'County', x: wx(1235), y: my(1238), w: 41, c: 'area' },
  { t: 'Milam', x: ex(1125), y: my(826), w: 37, c: 'area' },
  { t: 'County', x: ex(1125), y: my(869), w: 41, c: 'area' },
  { t: 'Granger', x: ex(277), y: my(1079), w: 49, c: 'park' },
  { t: 'Wildlife', x: ex(277), y: my(1122), w: 44, c: 'park' },
  { t: 'Management', x: ex(277), y: my(1165), w: 78, c: 'park' },
  { t: 'Area', x: ex(277), y: my(1207), w: 27, c: 'park' },
  { t: 'Balcones', x: wx(429), y: my(1478), w: 52, c: 'park' },
  { t: 'Canyonlands', x: wx(429), y: my(1521), w: 76, c: 'park' },
  { t: 'National', x: wx(429), y: my(1564), w: 51, c: 'park' },
]
const planes = [{ x: wx(1136), y: my(1157) }, { x: ex(1093), y: my(1301) }]
</script>

<template>
  <div class="page">
    <div class="topbar"></div>
    <svg class="logo" viewBox="69 54 540 756">
      <g fill="none" stroke="#bb2d50" stroke-width="12" stroke-linejoin="round" stroke-linecap="round">
        <path d="M295,239H375" />
        <path d="M375,239 L400,211 435,149 477,106 488,97 498,96 511,104 518,122 521,145 525,170 525,210 519,247 513,255 518,288 508,316 494,320 480,333 490,355 486,375 475,387 464,392" />
        <path d="M294,239 L268,206 238,149 196,106 186,97 174,96 160,104 152,122 151,145 144,170 144,210 150,247 156,255 151,288 161,316 175,320 188,333 180,355 184,375 195,387 205,392" />
        <path d="M159,255 L163,230 161,150 168,127 190,124 230,168 242,205 252,258 275,251 294,239" />
        <path d="M512,255 L508,230 512,150 503,125 481,124 440,168 426,205 417,258 396,251 375,239" />
        <path d="M252,258 L247,288 228,308 220,335 222,385 235,424 242,427 244,378 262,369 281,377 289,402 304,431 313,410 315,383 302,355 283,343 258,342 233,355 222,370" />
        <path d="M417,258 L424,288 440,308 448,335 446,385 436,424 428,427 426,378 409,369 388,377 382,402 366,431 357,410 355,383 369,355 388,343 414,342 436,355 446,370" />
        <path d="M220,338 L200,352 191,374 205,395 207,425 204,460 183,484 170,517 179,556 206,583 236,637 250,643 288,643 335,640 382,643 420,643 435,637 465,583 491,556 499,517 486,484 466,460 464,425 465,392 480,374 469,350 452,338" />
        <path d="M246,427 L259,491 267,503 283,480 303,442 313,450 308,485 294,520 292,545 295,572 309,589 335,594 359,589 373,572 378,545 375,520 362,485 357,450 367,442 387,480 402,503 411,491 423,427" />
        <path d="M303,431V442 M366,431V442 M270,503 V565 L284,597 303,603 320,601 335,612 351,601 367,603 386,597 400,565V503 M294,543 L335,537 377,543" />
        <path d="M301,268 L316,260H354L368,268 386,293 371,303 358,323 335,351 316,323 303,305 284,293Z" />
      </g>
      <g fill="#bb2d50"><circle cx="265" cy="394" r="12" /><circle cx="403" cy="394" r="12" /><path d="M303,568l10,-8 12,13 -4,12 -12,-3z M367,568l-10,-8 -13,13 4,12 12,-3z" /><circle cx="335" cy="607" r="12" /></g>
      <text x="191" y="708" textLength="297" lengthAdjust="spacingAndGlyphs" font-size="47" class="brand">GRAZIOSO</text>
      <text x="146" y="782" textLength="391" lengthAdjust="spacingAndGlyphs" font-size="72" font-weight="700" class="brand">SALVARE</text>
    </svg>
    <h1>Grazioso Salvare Dashboard - Collin Lanier</h1>
    <div class="rule"></div>
    <div class="select">
      <span class="value">All (Reset)</span>
      <svg class="clear" width="12" height="12" viewBox="0 0 12 12"><path d="M1 1 11 11M11 1 1 11" stroke="#999" stroke-width="2" /></svg>
      <span class="arrow"></span>
    </div>
    <div class="rule second"></div>

    <div class="table">
      <div class="row head" :style="{ gridTemplateColumns: gridTemplate }">
        <div class="cell"></div>
        <div v-for="c in columns" :key="c.name" class="cell">
          <svg class="sort" width="10" height="15" viewBox="0 0 10 15"><path d="M5 0 10 6.6H0Z M5 15 0 8.4H10Z" fill="#b3b3b3" /></svg>
          <span class="name">{{ c.name }}</span>
        </div>
      </div>
      <div v-for="(r, i) in rows" :key="i" class="row" :style="{ gridTemplateColumns: gridTemplate }">
        <div class="cell pick"><i class="radio" :class="{ on: i === 0 }"></i></div>
        <div v-for="(v, k) in r" :key="k" class="cell"><span class="name">{{ show(v) }}</span></div>
      </div>
    </div>
    <div class="pager">
      <span class="btn off wide"><svg width="14" height="12" viewBox="0 0 14 12"><path d="M6.5 1 1.8 6l4.7 5M12.5 1 7.8 6l4.7 5" /></svg></span>
      <span class="btn off prev"><svg width="8" height="12" viewBox="0 0 8 12"><path d="M6.5 1 1.8 6l4.7 5" /></svg></span>
      <span class="current">1</span>
      <span class="slash">/</span>
      <span class="total">1000</span>
      <span class="btn next"><svg width="8" height="12" viewBox="0 0 8 12"><path d="M1.5 1 6.2 6l-4.7 5" /></svg></span>
      <span class="btn wide"><svg width="14" height="12" viewBox="0 0 14 12"><path d="M1.5 1 6.2 6l-4.7 5M7.5 1l4.7 5-4.7 5" /></svg></span>
    </div>
    <div class="rule third"></div>

    <div class="panels">
      <svg class="chart" width="933" height="566" viewBox="5 1016 933 566">
        <text x="52" y="1069" class="title" textLength="313.5">Breeds based on filtered Data</text>
        <path d="M256.5,1167 L257,1180 258.7,1242 263.4,1325 268,1403 274,1497 279,1582 H341V1176.5H330L299,1190 270,1180Z" fill="#2e3e5b" />
        <path d="M334,1176.5H341V1582H334Z" fill="#25365a" />
        <path v-for="i in 16" :key="'s' + i" :d="`M${262 + i * 4.6},1215V1582`" stroke="#2a3957" stroke-width="1" opacity=".55" />
        <path v-for="(s, i) in slices" :key="'p' + i" :d="s.d" :fill="s.fill" />
        <g fill="none" stroke="#34445f" stroke-width="2">
          <path d="M284,1082.5H289V1121.5 M267,1102.5H272V1131 M257,1122.5H261.5V1143 M252,1142.5H257V1154" />
          <path v-for="(l, i) in leftLabels.filter((a) => a.tick)" :key="'t' + i" :d="`M${l.x + 4.5},${l.y - 0.9}h7`" />
          <path v-for="(l, i) in rightLabels.filter((a) => a.tick)" :key="'r' + i" :d="`M340,${l.y - 1}h5`" />
        </g>
        <text v-for="(l, i) in leftLabels" :key="'l' + i" :x="l.x" :y="l.y + 5.8" text-anchor="end" class="tick">{{ l.text }}</text>
        <text v-for="(l, i) in rightLabels" :key="'m' + i" :x="l.x" :y="l.y + 5.8" class="tick">0.01%</text>
        <text x="343" y="1142" class="tick">30.1%</text>
        <g v-for="l in legend" :key="l.name">
          <rect x="459.5" :y="l.y - 8" width="16.5" height="16.5" :fill="l.color" />
          <text x="494.5" :y="l.y + 6" class="tick" :textLength="l.w">{{ l.name }}</text>
        </g>
        <rect x="922.5" y="1127" width="8" height="26" rx="3" fill="#828cab" />
      </svg>

      <div class="map">
        <svg width="1333" height="566" viewBox="0 0 1333 566">
          <defs>
            <pattern id="hatch" width="7" height="7" patternUnits="userSpaceOnUse" patternTransform="rotate(45)"><path d="M0 0V7" stroke="#f3cdc5" stroke-width="2" /></pattern>
          </defs>
          <g transform="translate(-18,-16) scale(.43367,.37117)">
            <path v-for="(b, i) in westPatches" :key="i" :d="b.d" :fill="b.fill" opacity=".85" />
            <path v-for="(b, i) in westNature" :key="'n' + i" :d="b.d" :fill="b.fill" />
            <path :d="westNature[0].d" fill="url(#hatch)" stroke="#eeb9b0" stroke-dasharray="6 4" stroke-width="2" />
            <path v-for="(p, i) in parks" :key="'k' + i" :d="p" class="reserve" />
            <path :d="lakePark" class="reserve" />
            <path v-for="(s, i) in westStreets" :key="'w' + i" :d="s.d" class="line street" />
            <path v-for="(s, i) in west" :key="'r' + i" :d="s.d" class="line" :class="s.kind" />
          </g>
          <g transform="translate(662,-16) scale(.44005,.37117)">
            <path v-for="(b, i) in eastPatches" :key="i" :d="b.d" :fill="b.fill" opacity=".9" />
            <path v-for="(b, i) in eastNature" :key="'n' + i" :d="b.d" :fill="b.fill" />
            <path :d="granger" class="reserve" />
            <path v-for="(s, i) in east" :key="'r' + i" :d="s.d" class="line" :class="s.kind" />
          </g>
          <g stroke="#d6a5b3" stroke-width="1.5" fill="#e7cdd3">
            <rect x="327.5" y="177.5" width="61" height="23.5" rx="2" />
            <rect x="542" y="191.5" width="44" height="23" rx="2" />
          </g>
          <text x="357.5" y="194.4" class="shield" textLength="41" lengthAdjust="spacingAndGlyphs">TX 195</text>
          <text x="564.5" y="208.6" class="shield" textLength="24" lengthAdjust="spacingAndGlyphs">I 35</text>
          <path v-for="(p, i) in planes" :key="'a' + i" :transform="`translate(${p.x},${p.y})`" fill="#8561c5" d="M0,-8.5C1,-8.5 1.4,-7 1.4,-5.5V-2.5L8,2.6V4.4L1.4,2.2V5.8L3.4,7.5V8.6L0,7.6 -3.4,8.6V7.5L-1.4,5.8V2.2L-8,4.4V2.6L-1.4,-2.5V-5.5C-1.4,-7 -1,-8.5 0,-8.5Z" />
          <text v-for="(p, i) in places" :key="'c' + i" :x="p.x" :y="p.y" :textLength="p.w" lengthAdjust="spacingAndGlyphs" class="place" :class="p.c">{{ p.t }}</text>
          <circle cx="803" cy="571" r="16" fill="#4a93cb" stroke="#2f74ae" stroke-width="1.4" />
          <circle cx="803" cy="570" r="5.5" fill="#fff" />
        </svg>
        <div class="zoom"><span>+</span><span>−</span></div>
      </div>
    </div>

    <div class="devtools">
      <svg width="85" height="85" viewBox="180 150 255 255"><path d="M279,237 234,279 279,321 M340,237 385,279 340,321" fill="none" stroke="#fff" stroke-width="14" /></svg>
    </div>
    <div class="shade"></div>
  </div>
</template>

<style>
html, body { margin: 0; background: #0d0a05; }
</style>
<style scoped>
.page { position: relative; box-sizing: border-box; width: 2790px; height: 1582px; overflow: hidden; background: #fff; border-radius: 0 0 22px 18px / 0 0 12px 6px; padding: 0 9px 0 5px; display: flex; flex-direction: column; color: #000; }
.topbar { flex: none; height: 4px; margin: 0 -9px 0 -5px; background: #111113; border-bottom: 2px solid #48484a; }
.logo { flex: none; width: 180px; height: 252px; margin: 12px auto 0; }
.brand { font-family: "Liberation Serif", serif; fill: #bb2a1f; stroke: #bb2a1f; stroke-width: 1; }
h1 { flex: none; margin: 42px 0 0; height: 50px; line-height: 50px; text-align: center; font: 700 42.67px/50px "Liberation Serif", serif; }
.rule { flex: none; height: 1px; margin-top: 29px; background: #9a9a9a; border-bottom: 1px solid #eee; }
.select { flex: none; box-sizing: border-box; height: 48px; margin: 13px 13px 0; border: 1.33px solid #ccc; border-radius: 5px; display: flex; align-items: center; padding: 0 14px 0 13px; font: 21.33px/46px "Liberation Serif", serif; color: #333; }
.value { flex: 1; margin-top: -2px; }
.clear { margin: 3px 12px 0 0; }
.arrow { border: 6.5px solid transparent; border-top: 7px solid #999; border-bottom: 0; margin-top: 1px; }
.rule.second { margin-top: 13px; }
.rule.third { margin-top: 41px; }
.table { flex: none; margin-top: 11px; width: 2776px; overflow: hidden; border-top: 1px solid #d0d0d0; font: 17.33px/37px "DejaVu Sans Mono", monospace; }
.row { display: grid; height: 39px; border-bottom: 1px solid #d0d0d0; }
.head { background: #fafafa; }
.cell { box-sizing: border-box; border-right: 1px solid #d3d3d3; display: flex; align-items: center; overflow: hidden; padding: 0 4px 0 4px; white-space: nowrap; min-width: 0; }
.cell:last-child { border-right: 0; padding-right: 0; }
.name { margin-left: auto; flex: none; padding-top: 2px; }
.sort { flex: none; margin-right: -1px; }
.pick { justify-content: center; padding: 0; }
.radio { box-sizing: border-box; width: 17px; height: 17px; border: 1.4px solid #767676; border-radius: 50%; background: #fff; margin: 1px 0 0 -2px; }
.radio.on { border: 2px solid #1a73e8; background: #1a73e8; box-shadow: inset 0 0 0 2px #fff; }
.pager { flex: none; height: 34px; margin: 7px 6px 0 0; display: flex; justify-content: flex-end; font: 17.33px/33px "DejaVu Sans Mono", monospace; }
.btn { width: 23px; display: flex; align-items: center; justify-content: center; background: #eee; }
.btn.wide { width: 29px; }
.btn svg { fill: none; stroke: #000; stroke-width: 2.6; margin-bottom: 2px; }
.btn.off { background: #fafafa; }
.btn.off svg { stroke: #b3b3b3; }
.btn.prev { width: 22px; margin: 0 7px 0 13px; }
.btn.next { margin: 0 13px 0 15px; }
.current { width: 64px; height: 31px; line-height: 36px; border-bottom: 1px solid #ccc; text-align: center; }
.slash { width: 20px; text-align: center; }
.total { width: 42px; margin-left: 14px; text-align: center; }
.panels { flex: none; display: flex; height: 566px; margin-top: 11px; }
.chart { flex: none; font-family: "Open Sans", sans-serif; fill: #2f4260; }
.title { font-size: 22.67px; }
.tick { font-size: 16px; }
.map { position: relative; flex: none; width: 1333px; height: 566px; background: #f2efe9; overflow: hidden; }
.map svg { display: block; }
.line { fill: none; vector-effect: non-scaling-stroke; stroke-linejoin: round; stroke-linecap: round; }
.street { stroke: #c9c8ca; stroke-width: .9; }
.minor { stroke: #d0cfcd; stroke-width: 1.5; }
.local { stroke: #c6c6c5; stroke-width: 2; }
.county { stroke: #cfbdd0; stroke-width: 2; stroke-dasharray: 14 3 3 3; stroke-linecap: butt; }
.river { stroke: #acd3e1; stroke-width: 2.4; }
.creek { stroke: #acd3e1; stroke-width: 2.2; stroke-dasharray: 6 6; }
.primary { stroke: #f5c781; stroke-width: 2.8; }
.rail { stroke: #a5a5a3; stroke-width: 2; }
.brown { stroke: #b59a74; stroke-width: 2.6; }
.rust { stroke: #b8705f; stroke-width: 2.6; }
.track { stroke: #ae7566; stroke-width: 1.8; }
.trunk { stroke: #f0987c; stroke-width: 3.4; }
.motorway { stroke: #dc6f8c; stroke-width: 3.8; }
.reserve { fill: rgba(178, 214, 160, .22); stroke: #a3cc98; stroke-width: 4; stroke-opacity: .75; vector-effect: non-scaling-stroke; stroke-linejoin: round; }
.shield { font: 500 14.5px "Noto Sans", sans-serif; fill: #69334a; text-anchor: middle; }
.place { font: 14.4px "Noto Sans", sans-serif; text-anchor: middle; paint-order: stroke; stroke: rgba(255, 255, 255, .65); stroke-width: 2.6px; stroke-linejoin: round; }
.town { fill: #484848; }
.area { fill: #aa88b5; font-style: italic; }
.park { fill: #458f4a; font-style: italic; }
.zoom { position: absolute; left: 14px; top: 14px; width: 38px; border: 2.67px solid rgba(0, 0, 0, .22); border-radius: 5px; background: #fff; background-clip: padding-box; }
.zoom span { display: block; height: 39px; padding-top: 1px; font: 700 29px/39px "Liberation Sans", sans-serif; text-align: center; text-indent: 1px; }
.zoom span:first-child { border-bottom: 1.33px solid #ccc; }
.devtools { position: absolute; left: 2660px; top: 1450px; width: 85px; height: 85px; border-radius: 50%; background: #419ef9; box-shadow: 0 0 3px rgba(80, 80, 80, .12); }
.shade { position: absolute; left: -200px; top: 150px; width: 200px; height: 1150px; box-shadow: 0 0 110px rgba(0, 0, 0, .2); pointer-events: none; }
</style>
